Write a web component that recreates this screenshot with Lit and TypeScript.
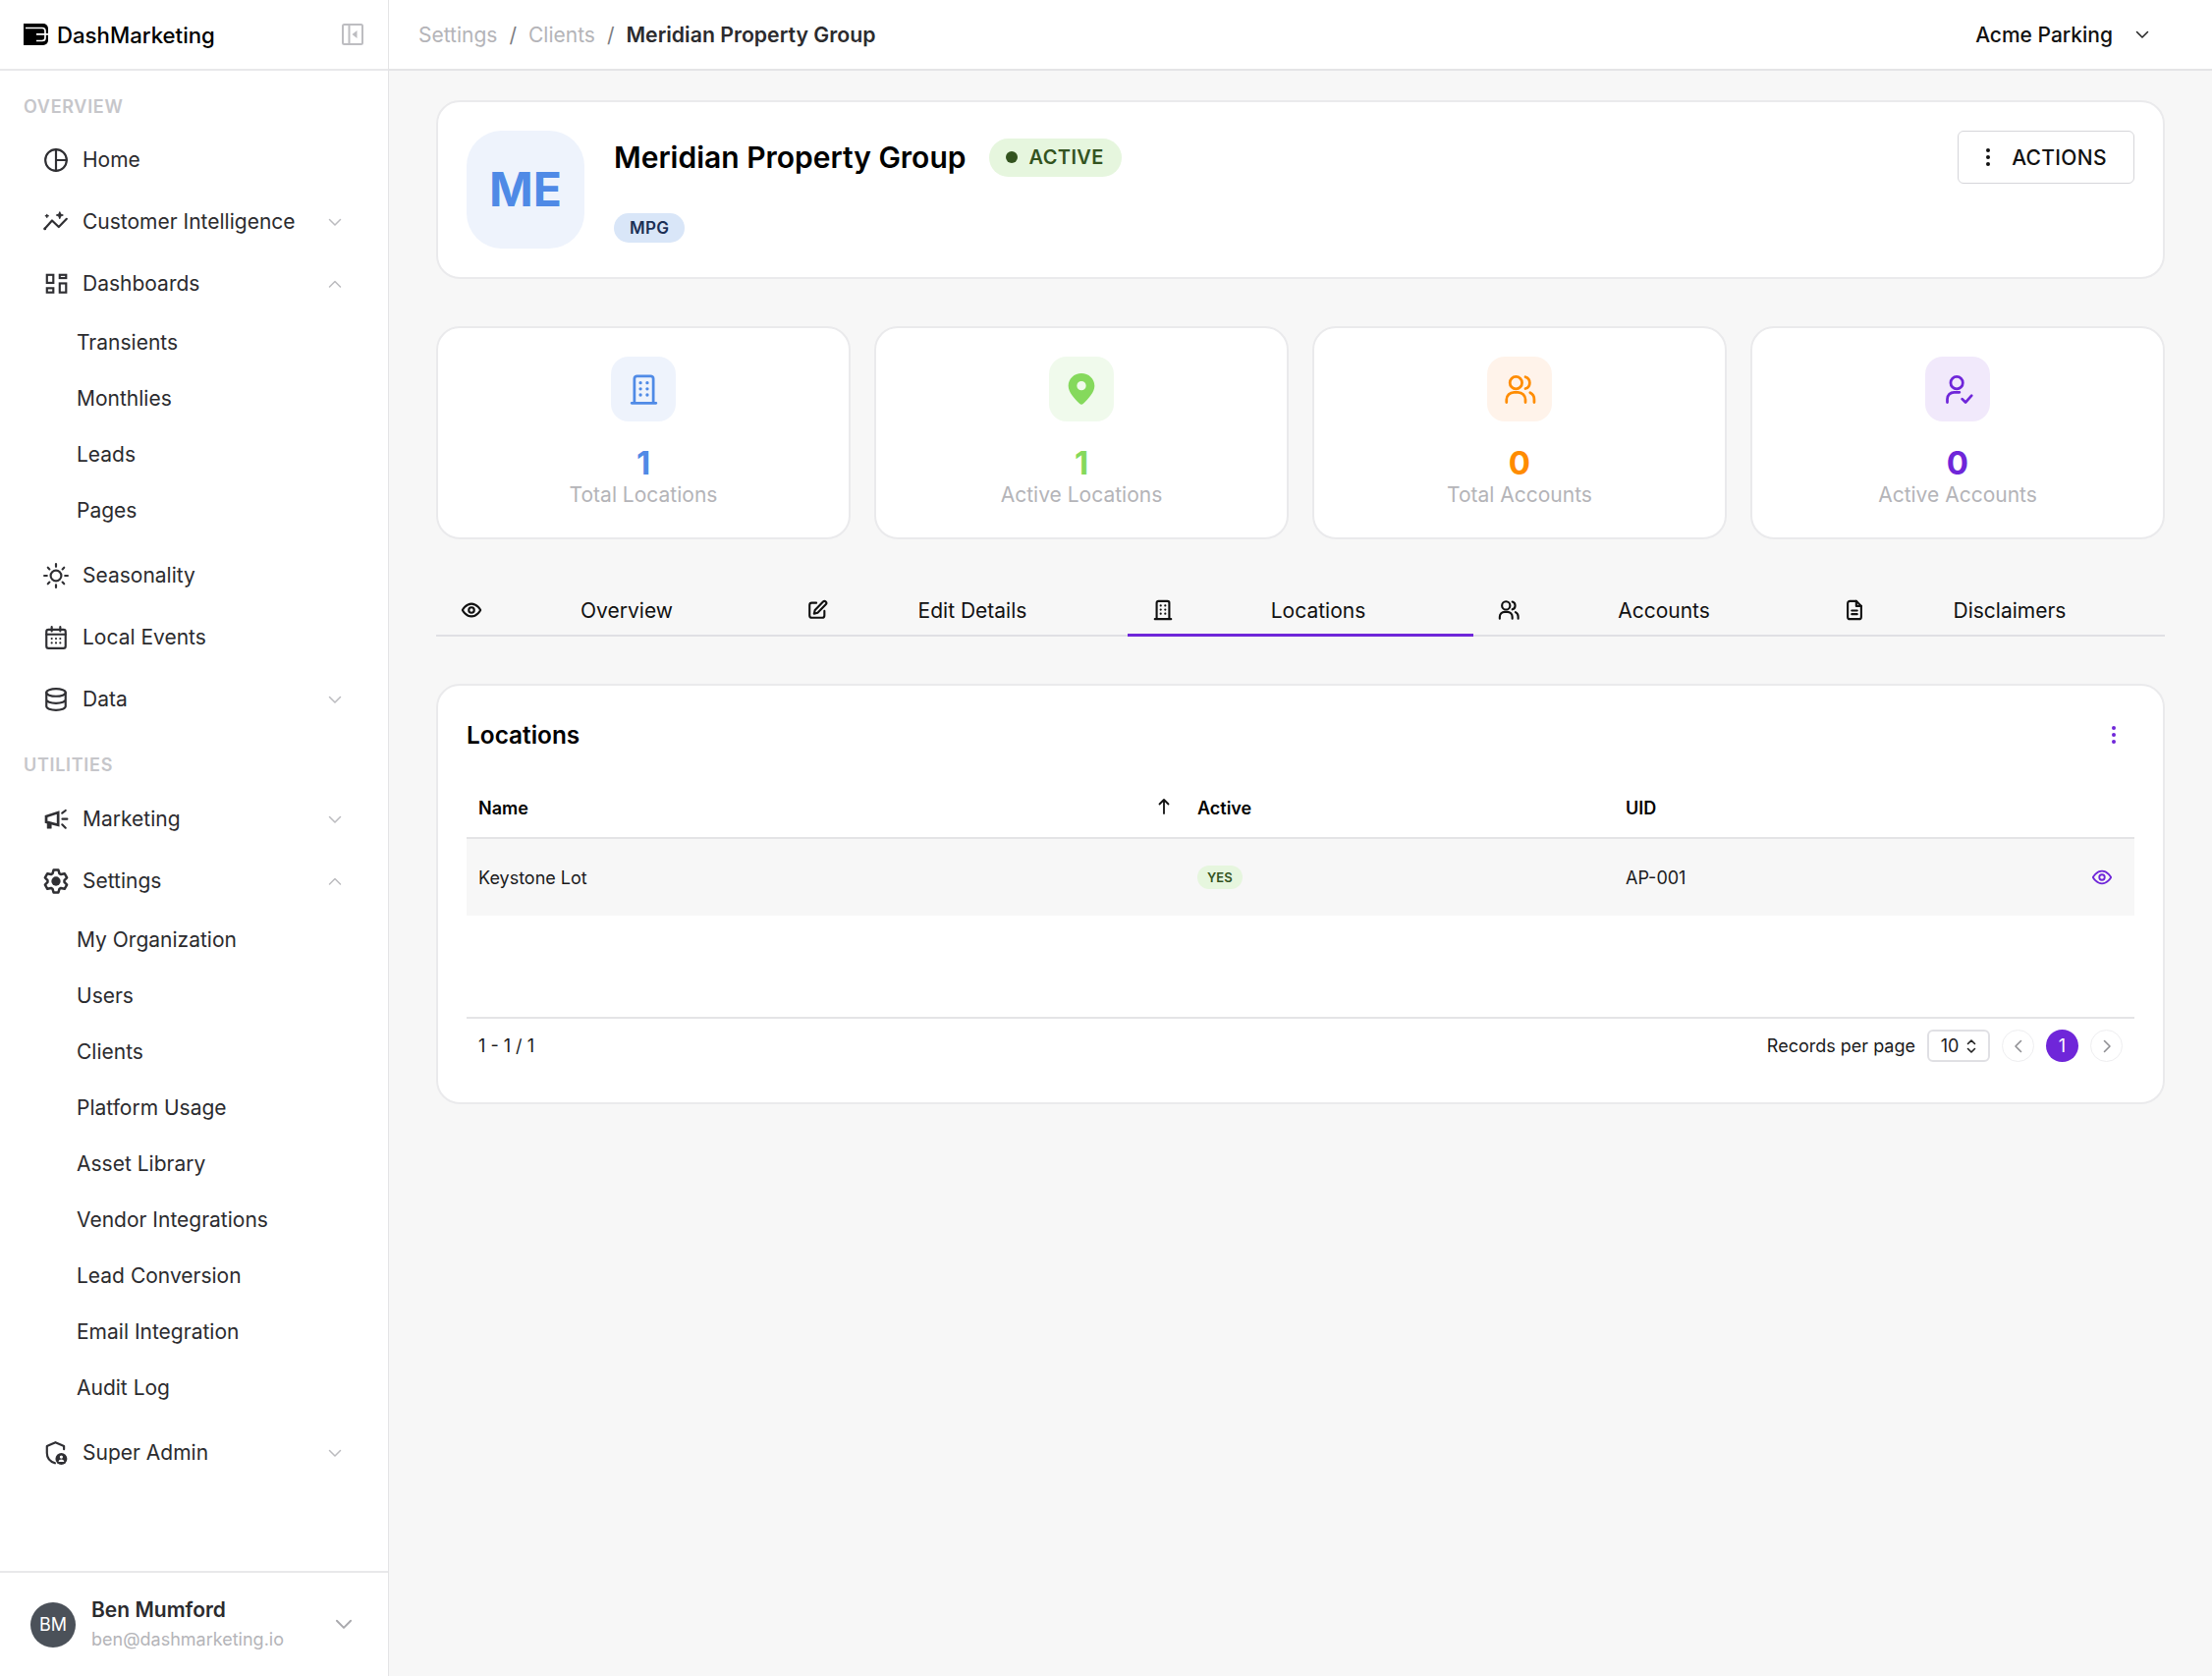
import { LitElement, html, css, svg } from 'lit';
import { customElement } from 'lit/decorators.js';

// six toothed gear outline, easier to compute than to write by hand
const gearPath = () => {
  const pts: string[] = [];
  for (let k = 0; k < 6; k++) {
    const a = -90 + k * 60;
    for (const [d, r] of [[-24, 7.9], [-12, 10.8], [12, 10.8], [24, 7.9]]) {
      const t = ((a + d) * Math.PI) / 180;
      pts.push(`${(12 + r * Math.cos(t)).toFixed(2)} ${(12 + r * Math.sin(t)).toFixed(2)}`);
    }
  }
  return `M${pts.join('L')}Z`;
};

// icon bodies, all on a 24 box
const icons: Record<string, any> = {
  home: svg`<circle cx="12" cy="12" r="10"/><path d="M12 2v20M12 12h10"/>`,
  insight: svg`<path d="M1.500 18.300 8.300 10.600l6.300 6 7.400-7.500"/><circle cx="1.600" cy="18.400" r="1.300" fill="currentColor" stroke="none"/><path d="M15.500 2.500l.9 2.200 2.200.9-2.200.9-.9 2.200-.9-2.200-2.200-.9 2.200-.9z" fill="currentColor" stroke-width="1"/><path d="M3.500 5v2.600M2.200 6.300h2.600" stroke-width="1.300"/>`,
  dash: svg`<g stroke-linejoin="miter"><rect x="3.500" y="3.500" width="6" height="7.500"/><rect x="15.500" y="3.500" width="6" height="3"/><rect x="3.500" y="16" width="6" height="4"/><rect x="15.500" y="11.500" width="6" height="8.500"/></g>`,
  sun: svg`<circle cx="12" cy="12" r="5"/><path d="M12 1v2.500M12 20.500V23M1 12h2.500M20.500 12H23M4.400 4.400l1.500 1.500M18.100 18.100l1.500 1.500M4.400 19.600l1.500-1.500M18.100 5.900l1.500-1.500"/>`,
  calendar: svg`<rect x="3" y="4.500" width="18" height="17.500" rx="2"/><path d="M8 2v4M16 2v4M3 9h18"/><path d="M8 13h.01M12 13h.01M16 13h.01M8 17h.01M12 17h.01M16 17h.01" stroke-linecap="round"/>`,
  data: svg`<ellipse cx="12" cy="5.500" rx="9" ry="3.500"/><path d="M3 5.500v13c0 2 4 3.500 9 3.500s9-1.500 9-3.500v-13M3 12c0 2 4 3.500 9 3.500s9-1.500 9-3.500"/>`,
  megaphone: svg`<path d="M2.800 9.200 14 5.600v11.800L2.800 14.400z" stroke-width="2.500" stroke-linejoin="miter"/><path d="M4 15v5.300h3.400v-4" fill="currentColor" stroke-width="1"/><path d="M17.800 6.200 21 3.700M18 11.700h4.500M17.800 16.900 21 20"/>`,
  gear: svg`<path d=${gearPath()} stroke-width="2.300"/><circle cx="12" cy="12" r="4.300" fill="currentColor" stroke="none"/>`,
  shield: svg`<path d="M11 21.500C6.500 20 3.500 16.500 3.500 12V5.500L11.500 2l8 3.500v3"/><circle cx="17" cy="17.500" r="5.500" fill="currentColor" stroke="none"/><circle cx="17" cy="15.800" r="1.500" fill="#fff" stroke="none"/><path d="M14.300 20.300c.4-1.700 1.500-2.300 2.700-2.300s2.300.6 2.700 2.300z" fill="#fff" stroke="none"/>`,
  eye: svg`<path d="M2 12s3.600-7 10-7 10 7 10 7-3.600 7-10 7-10-7-10-7z"/><circle cx="12" cy="12" r="3"/>`,
  edit: svg`<path d="M11 4H6a2.500 2.500 0 0 0-2.500 2.500V18A2.500 2.500 0 0 0 6 20.500h11.500A2.500 2.500 0 0 0 20 18v-5"/><path d="M18.500 2.800a2.100 2.100 0 0 1 3 3L12.500 15l-4 1 1-4z"/>`,
  building: svg`<path d="M5 22V4a2 2 0 0 1 2-2h10a2 2 0 0 1 2 2v18M3 22h18"/><path d="M9.500 7h.01M14.500 7h.01M9.500 11.500h.01M14.500 11.500h.01M9.500 16h.01M14.500 16h.01" stroke-width="2.400" stroke-linecap="round"/>`,
  users: svg`<circle cx="9" cy="7" r="4.500"/><path d="M2 21.500v-2a5.500 5.500 0 0 1 5.500-5.500h3a5.500 5.500 0 0 1 5.500 5.500v2M16 2.700a4.500 4.500 0 0 1 0 8.600M19.500 14.300a5.500 5.500 0 0 1 3 5v2.200"/>`,
  usercheck: svg`<circle cx="11" cy="7" r="4.500"/><path d="M4 21.500v-2.500a5 5 0 0 1 5-5h4"/><path d="M15 19l2.500 2.500 4.500-5"/>`,
  file: svg`<path d="M14 2H7a2.500 2.500 0 0 0-2.500 2.500v15A2.500 2.500 0 0 0 7 22h10a2.500 2.500 0 0 0 2.500-2.500V7.500z"/><path d="M14 2v5.500h5.500M9 12.500h6M9 16.500h6"/>`,
};

const ic = (name: string, size = 24) =>
  html`<svg class="ic" width=${size} height=${size} viewBox="0 0 24 24" fill="none" stroke="currentColor" stroke-width="2" stroke-linecap="round" stroke-linejoin="round">${icons[name]}</svg>`;

const chevron = (up: boolean) =>
  html`<svg class="chev" width="14" height="14" viewBox="0 0 14 14" fill="none" stroke="currentColor" stroke-width="1.500" stroke-linecap="round" stroke-linejoin="round"><path d=${up ? 'M1.500 10 7 4.500 12.500 10' : 'M1.500 4.500 7 10l5.500-5.500'}/></svg>`;

const dots = html`<svg width="6" height="20" viewBox="0 0 6 20" fill="currentColor"><circle cx="3" cy="3" r="2"/><circle cx="3" cy="10" r="2"/><circle cx="3" cy="17" r="2"/></svg>`;

type NavItem = { label: string; icon: string; chev?: 'up' | 'down'; subs?: string[] };

const overview: NavItem[] = [
  { label: 'Home', icon: 'home' },
  { label: 'Customer Intelligence', icon: 'insight', chev: 'down' },
  { label: 'Dashboards', icon: 'dash', chev: 'up', subs: ['Transients', 'Monthlies', 'Leads', 'Pages'] },
  { label: 'Seasonality', icon: 'sun' },
  { label: 'Local Events', icon: 'calendar' },
  { label: 'Data', icon: 'data', chev: 'down' },
];

const utilities: NavItem[] = [
  { label: 'Marketing', icon: 'megaphone', chev: 'down' },
  {
    label: 'Settings', icon: 'gear', chev: 'up',
    subs: ['My Organization', 'Users', 'Clients', 'Platform Usage', 'Asset Library', 'Vendor Integrations', 'Lead Conversion', 'Email Integration', 'Audit Log'],
  },
  { label: 'Super Admin', icon: 'shield', chev: 'down' },
];

const stats = [
  { n: '1', label: 'Total Locations', icon: 'building', cls: 'blue' },
  { n: '1', label: 'Active Locations', icon: 'pin', cls: 'green' },
  { n: '0', label: 'Total Accounts', icon: 'users', cls: 'orange' },
  { n: '0', label: 'Active Accounts', icon: 'usercheck', cls: 'purple' },
];

const tabs = [
  { label: 'Overview', icon: 'eye' },
  { label: 'Edit Details', icon: 'edit' },
  { label: 'Locations', icon: 'building', active: true },
  { label: 'Accounts', icon: 'users' },
  { label: 'Disclaimers', icon: 'file' },
];

@customElement('app-root')
export class AppRoot extends LitElement {
  static styles = css`
    :host {
      display: flex;
      height: 1706px;
      background: #f7f7f7;
      font-family: Inter, 'Liberation Sans', sans-serif;
      color: #000;
      overflow: hidden;
    }
    svg { display: block; flex: none; }

    .side {
      width: 396px;
      flex: none;
      box-sizing: border-box;
      background: #fff;
      border-right: 1px solid #e4e4e6;
      display: flex;
      flex-direction: column;
    }
    .brand {
      height: 72px;
      box-sizing: border-box;
      flex: none;
      border-bottom: 2px solid #e8e8ea;
      display: flex;
      align-items: center;
      padding: 0 25px 0 24px;
      gap: 9px;
      font-size: 22.200px;
      font-weight: 500;
    }
    .brand .name { flex: 1; }
    .collapse { color: #bdbdc1; }
    .nav { flex: 1; }
    .section {
      font-size: 18px;
      font-weight: 600;
      letter-spacing: 0.7px;
      color: #c6c6ca;
      padding-left: 24px;
      height: 22px;
      line-height: 22px;
    }
    .section.first { margin-top: 26px; margin-bottom: 11px; }
    .section.second { margin-top: 25px; margin-bottom: 12px; }
    .item {
      height: 63px;
      display: flex;
      align-items: center;
      padding-left: 44px;
      padding-right: 47px;
      gap: 14px;
      font-size: 21px;
      color: #2b2b2e;
    }
    .item .label { flex: 1; }
    .item .ic { color: #2f2f33; }
    .chev { color: #bbbbbf; }
    .subs { margin-bottom: 6px; }
    .sub {
      height: 57px;
      line-height: 57px;
      padding-left: 78px;
      font-size: 21px;
      color: #2b2b2e;
    }
    .user {
      height: 107px;
      flex: none;
      box-sizing: border-box;
      border-top: 2px solid #e8e8ea;
      display: flex;
      align-items: center;
      padding: 0 36px 0 31px;
      gap: 16px;
    }
    .avatar {
      width: 46px;
      height: 46px;
      border-radius: 50%;
      background: #4b5159;
      color: #fff;
      font-size: 18px;
      display: flex;
      align-items: center;
      justify-content: center;
      flex: none;
    }
    .who { flex: 1; padding-top: 1px; }
    .who b { display: block; font-size: 21px; font-weight: 600; color: #2b2b2e; line-height: 30px; }
    .who span { display: block; font-size: 18px; color: #b4b4b8; line-height: 30px; }
    .user .chev { width: 18px; height: 18px; color: #a9a9ad; margin-bottom: 2px; }

    .main { flex: 1; display: flex; flex-direction: column; min-width: 0; }
    .top {
      height: 72px;
      box-sizing: border-box;
      flex: none;
      background: #fff;
      border-bottom: 2px solid #e4e4e6;
      display: flex;
      align-items: center;
      padding: 0 64px 0 30px;
      font-size: 21px;
    }
    .crumbs { flex: 1; display: flex; gap: 12px; align-items: center; color: #b4b4b8; }
    .crumbs .sep { color: #7d7d82; }
    .crumbs b { color: #2b2b2e; font-weight: 600; font-size: 21.250px; }
    .org { display: flex; align-items: center; gap: 23px; font-weight: 500; color: #111; }
    .org .chev { color: #222; }

    .content { padding: 30px 48px 0; display: flex; flex-direction: column; }
    .card { background: #fff; border: 2px solid #eaeaec; border-radius: 24px; box-sizing: border-box; }
    .profile { height: 182px; padding: 29px 29px; display: flex; align-items: flex-start; gap: 30px; }
    .mono {
      width: 120px;
      height: 118px;
      padding-bottom: 2px;
      border-radius: 36px;
      background: #eef3fc;
      color: #4f8ae6;
      font-size: 48px;
      font-weight: 700;
      display: flex;
      align-items: center;
      justify-content: center;
      flex: none;
    }
    .info { flex: 1; }
    .title-row { display: flex; align-items: center; gap: 24px; height: 54px; }
    .title-row h1 { margin: 0; font-size: 30px; font-weight: 600; }
    .pill-active {
      height: 39px;
      padding: 0 18px 0 17px;
      border-radius: 20px;
      background: #e6f6de;
      color: #33531f;
      font-size: 20px;
      font-weight: 600;
      letter-spacing: 0.4px;
      display: flex;
      align-items: center;
      gap: 11px;
    }
    .pill-active i { width: 12px; height: 12px; border-radius: 50%; background: #33531f; }
    .pill-code {
      display: inline-block;
      margin-top: 30px;
      height: 30px;
      line-height: 30px;
      padding: 0 16px;
      border-radius: 15px;
      background: #d9e6f8;
      color: #1b2f55;
      font-size: 17px;
      font-weight: 600;
      letter-spacing: 0.3px;
    }
    .actions {
      height: 54px;
      width: 180px;
      box-sizing: border-box;
      border: 1px solid #d6d6da;
      border-radius: 6px;
      display: flex;
      align-items: center;
      justify-content: center;
      gap: 21px;
      font-size: 21px;
      font-weight: 500;
      letter-spacing: 0.3px;
      color: #111;
    }

    .stats { display: grid; grid-template-columns: repeat(4, 1fr); gap: 24px; margin-top: 48px; }
    .stat { height: 217px; display: flex; flex-direction: column; align-items: center; padding-top: 29px; }
    .stat .box { width: 66px; height: 66px; border-radius: 18px; display: flex; align-items: center; justify-content: center; }
    .stat .num { font-size: 33px; font-weight: 700; line-height: 40px; margin-top: 22px; }
    .stat .lbl { font-size: 21px; line-height: 30px; margin-top: -2px; }
    .blue .box { background: #eef3fc; } .blue { color: #4f8ae6; }
    .green .box { background: #f0faec; } .green { color: #85d95c; }
    .orange .box { background: #fff3ea; } .orange { color: #ff8c00; }
    .purple .box { background: #f1e9fb; } .purple { color: #6f26d9; }
    .stat .lbl { color: #b4b4b8; }

    .tabs { display: grid; grid-template-columns: repeat(5, 1fr); margin-top: 49px; height: 50px; }
    .tab {
      display: flex;
      align-items: center;
      padding: 0 12px 2px 24px;
      box-sizing: border-box;
      border-bottom: 2px solid #e0e0e4;
      font-size: 21px;
      color: #111;
    }
    .tab .ic { margin: 0 1px; stroke-width: 2.300; }
    .tab span { flex: 1; text-align: center; }
    .tab.active { border-bottom: 3px solid #6f26d9; padding-bottom: 1px; }

    .panel { margin-top: 48px; height: 428px; padding: 3px 29px 0; display: flex; flex-direction: column; }
    .panel-head { height: 94px; display: flex; align-items: center; justify-content: space-between; padding-right: 18px; flex: none; }
    .panel-head h2 { margin: 0; font-size: 24.400px; font-weight: 600; }
    .panel-head svg { color: #6f26d9; }
    .thead, .row { display: grid; grid-template-columns: 732px 436px 1fr; padding-left: 12px; align-items: center; }
    .thead { height: 54px; padding-bottom: 3px; border-bottom: 2px solid #e4e4e6; font-size: 18px; font-weight: 600; flex: none; }
    .name-h { display: flex; justify-content: space-between; padding-right: 27px; }
    .row { height: 78px; background: #f7f7f7; font-size: 18px; color: #1a1a1c; flex: none; }
    .row .act { display: flex; justify-content: space-between; align-items: center; padding-right: 22px; }
    .row .act svg { color: #6f26d9; }
    .yes {
      display: inline-block;
      height: 24px;
      line-height: 24px;
      padding: 0 10px;
      border-radius: 12px;
      background: #e6f6de;
      color: #33531f;
      font-size: 13px;
      font-weight: 600;
    }
    .foot {
      margin-top: 103px;
      height: 55px;
      flex: none;
      border-top: 2px solid #e4e4e6;
      display: flex;
      align-items: center;
      justify-content: space-between;
      padding: 0 12px;
      font-size: 18px;
      color: #1a1a1c;
    }
    .pager { display: flex; align-items: center; gap: 12px; }
    .select {
      width: 64px;
      height: 33px;
      box-sizing: border-box;
      border: 2px solid #e0e0e4;
      border-radius: 6px;
      display: flex;
      align-items: center;
      justify-content: center;
      gap: 8px;
    }
    .circle {
      width: 33px;
      height: 33px;
      box-sizing: border-box;
      border: 1px solid #eeeef0;
      border-radius: 50%;
      display: flex;
      align-items: center;
      justify-content: center;
      color: #8f8f93;
    }
    .circle.on { background: #6f26d9; border: 0; color: #fff; font-size: 18px; }
  `;

  private renderItem(it: NavItem) {
    return html`
      <div class="item">
        ${ic(it.icon, 26)}
        <span class="label">${it.label}</span>
        ${it.chev ? chevron(it.chev === 'up') : ''}
      </div>
      ${it.subs ? html`<div class="subs">${it.subs.map((s) => html`<div class="sub">${s}</div>`)}</div>` : ''}
    `;
  }

  private renderStatIcon(name: string) {
    if (name === 'pin') {
      return html`<svg width="32" height="36" viewBox="0 0 24 27"><path fill="currentColor" fill-rule="evenodd" d="M12 1.500C6.500 1.500 2 5.600 2 11c0 5 5 10 8.500 13.500a2 2 0 0 0 3 0C17 21 22 16 22 11c0-5.400-4.500-9.500-10-9.500zm0 6a3.500 3.500 0 1 1 0 7 3.500 3.500 0 0 1 0-7z"/></svg>`;
    }
    return ic(name, 33);
  }

  render() {
    return html`
      <aside class="side">
        <div class="brand">
          <svg width="25" height="22" viewBox="0 0 25 22"><path fill="#000" d="M0 0h20a5 5 0 0 1 5 5v12a5 5 0 0 1-5 5H0z"/><path fill="none" stroke="#fff" stroke-width="1.700" d="M2 4.500h17a3 3 0 0 1 3 3v7a3 3 0 0 1-3 3h-6M13 10.800h12"/></svg>
          <span class="name">DashMarketing</span>
          <svg class="collapse" width="22" height="22" viewBox="0 0 22 22" fill="none" stroke="currentColor" stroke-width="2"><rect x="1" y="1" width="20" height="20" rx="1.500"/><path d="M7.500 1v20"/><path d="M15.500 7v8l-5-4z" fill="currentColor" stroke="none"/></svg>
        </div>
        <div class="nav">
          <div class="section first">OVERVIEW</div>
          ${overview.map((i) => this.renderItem(i))}
          <div class="section second">UTILITIES</div>
          ${utilities.map((i) => this.renderItem(i))}
        </div>
        <div class="user">
          <div class="avatar">BM</div>
          <div class="who"><b>Ben Mumford</b><span>ben@dashmarketing.io</span></div>
          ${chevron(false)}
        </div>
      </aside>
      <div class="main">
        <header class="top">
          <div class="crumbs">
            <span>Settings</span><span class="sep">/</span><span>Clients</span><span class="sep">/</span><b>Meridian Property Group</b>
          </div>
          <div class="org">Acme Parking ${chevron(false)}</div>
        </header>
        <div class="content">
          <section class="card profile">
            <div class="mono">ME</div>
            <div class="info">
              <div class="title-row">
                <h1>Meridian Property Group</h1>
                <div class="pill-active"><i></i>ACTIVE</div>
              </div>
              <span class="pill-code">MPG</span>
            </div>
            <div class="actions">${dots}<span>ACTIONS</span></div>
          </section>

          <div class="stats">
            ${stats.map((s) => html`
              <div class="card stat ${s.cls}">
                <div class="box">${this.renderStatIcon(s.icon)}</div>
                <div class="num">${s.n}</div>
                <div class="lbl">${s.label}</div>
              </div>`)}
          </div>

          <div class="tabs">
            ${tabs.map((t) => html`
              <div class="tab ${t.active ? 'active' : ''}">${ic(t.icon, 22)}<span>${t.label}</span></div>`)}
          </div>

          <section class="card panel">
            <div class="panel-head"><h2>Locations</h2>${dots}</div>
            <div class="thead">
              <div class="name-h">Name
                <svg width="14" height="18" viewBox="0 0 14 18" fill="none" stroke="#111" stroke-width="1.800" stroke-linecap="round" stroke-linejoin="round"><path d="M7 16V2M2.500 6.500 7 2l4.500 4.500"/></svg>
              </div>
              <div>Active</div>
              <div>UID</div>
            </div>
            <div class="row">
              <div>Keystone Lot</div>
              <div><span class="yes">YES</span></div>
              <div class="act">AP-001 ${ic('eye', 22)}</div>
            </div>
            <div class="foot">
              <span>1 - 1 / 1</span>
              <div class="pager">
                <span>Records per page</span>
                <div class="select">10
                  <svg width="10" height="16" viewBox="0 0 10 16" fill="none" stroke="#222" stroke-width="1.600" stroke-linecap="round" stroke-linejoin="round"><path d="M1.500 5.500 5 2l3.500 3.500M1.500 10.500 5 14l3.500-3.500"/></svg>
                </div>
                <div class="circle"><svg width="10" height="14" viewBox="0 0 10 14" fill="none" stroke="currentColor" stroke-width="1.600" stroke-linecap="round" stroke-linejoin="round"><path d="M7.500 1.500 2 7l5.500 5.500"/></svg></div>
                <div class="circle on">1</div>
                <div class="circle"><svg width="10" height="14" viewBox="0 0 10 14" fill="none" stroke="currentColor" stroke-width="1.600" stroke-linecap="round" stroke-linejoin="round"><path d="M2.500 1.500 8 7l-5.500 5.500"/></svg></div>
              </div>
            </div>
          </section>
        </div>
      </div>
    `;
  }
}
